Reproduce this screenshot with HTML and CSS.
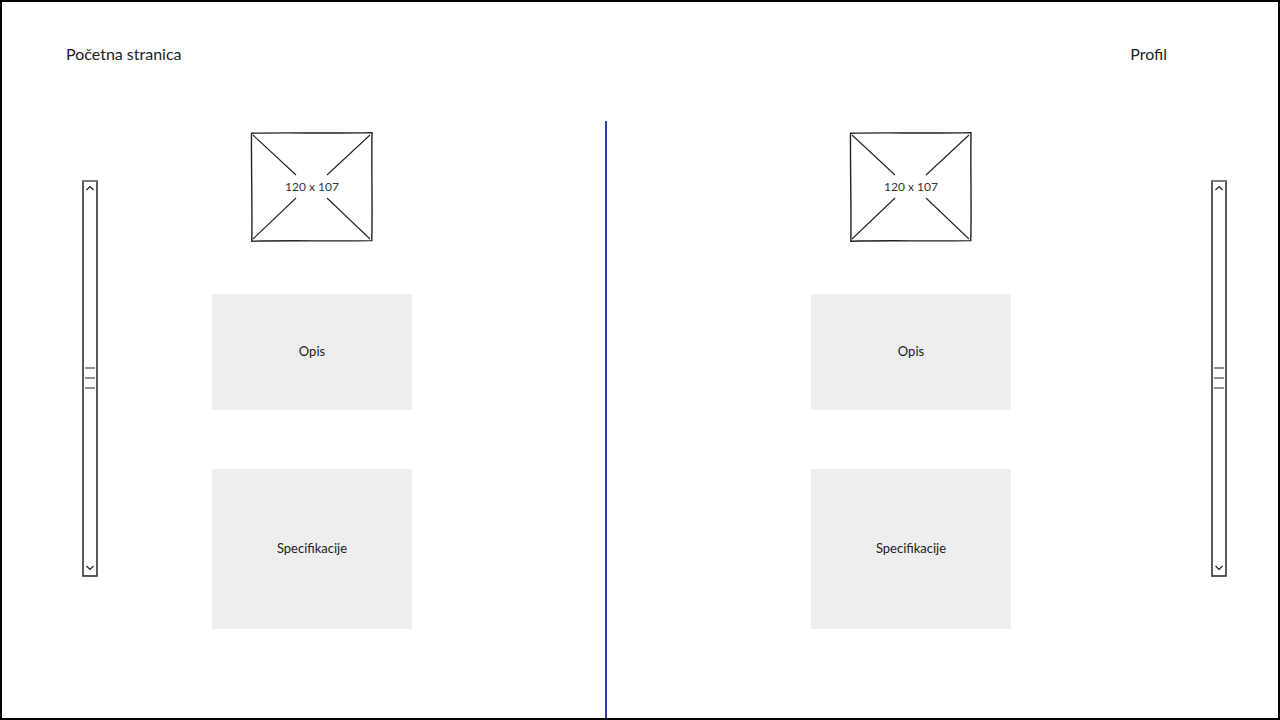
FILE: index.html
```html
<!DOCTYPE html>
<html lang="hr">
<head>
<meta charset="utf-8">
<title>Wireframe</title>
<link rel="stylesheet" href="styles.css">
</head>
<body>
<div class="frame">
  <header class="topbar">
    <span class="nav-link">Početna stranica</span>
    <span class="nav-link">Profil</span>
  </header>
  <main class="main">
    <section class="panel panel-left">
      <div class="scrollbar">
        <svg width="16" height="397" viewBox="0 0 16 397">
          <rect x="1" y="1" width="14" height="395" fill="none" stroke="#333" stroke-width="1.6"/>
          <line x1="1" y1="1" x2="15" y2="1" stroke="#888" stroke-width="1.6"/>
          <polyline points="4.5,10 8,6.5 11.5,10" fill="none" stroke="#222" stroke-width="1.2"/>
          <polyline points="4.5,386 8,389.5 11.5,386" fill="none" stroke="#222" stroke-width="1.2"/>
          <line x1="3" y1="188" x2="13" y2="188" stroke="#555" stroke-width="1.3"/>
          <line x1="3" y1="198" x2="13" y2="198" stroke="#555" stroke-width="1.3"/>
          <line x1="3" y1="208" x2="13" y2="208" stroke="#555" stroke-width="1.3"/>
        </svg>
      </div>
      <div class="content">
        <div class="placeholder">
          <svg width="124" height="112" viewBox="0 0 124 112">
            <path d="M1.5 2.2 C40 1.4 80 2.6 122 1.6 C121.4 40 122.6 72 121.8 109.6 C80 110.4 40 109.2 1.8 110.2 C2.4 72 1.2 40 1.5 2.2 Z" fill="none" stroke="#222" stroke-width="1.4"/>
            <path d="M3 4 L46 44" stroke="#222" stroke-width="1.1"/>
            <path d="M77 67 L120 108" stroke="#222" stroke-width="1.1"/>
            <path d="M120 4 L77 44" stroke="#222" stroke-width="1.1"/>
            <path d="M46 67 L3 108" stroke="#222" stroke-width="1.1"/>
          </svg>
          <span class="ph-label">120 x 107</span>
        </div>
        <div class="box box-opis">Opis</div>
        <div class="box box-spec">Specifikacije</div>
      </div>
    </section>
    <div class="divider"></div>
    <section class="panel panel-right">
      <div class="content">
        <div class="placeholder">
          <svg width="124" height="112" viewBox="0 0 124 112">
            <path d="M1.5 2.2 C40 1.4 80 2.6 122 1.6 C121.4 40 122.6 72 121.8 109.6 C80 110.4 40 109.2 1.8 110.2 C2.4 72 1.2 40 1.5 2.2 Z" fill="none" stroke="#222" stroke-width="1.4"/>
            <path d="M3 4 L46 44" stroke="#222" stroke-width="1.1"/>
            <path d="M77 67 L120 108" stroke="#222" stroke-width="1.1"/>
            <path d="M120 4 L77 44" stroke="#222" stroke-width="1.1"/>
            <path d="M46 67 L3 108" stroke="#222" stroke-width="1.1"/>
          </svg>
          <span class="ph-label">120 x 107</span>
        </div>
        <div class="box box-opis">Opis</div>
        <div class="box box-spec">Specifikacije</div>
      </div>
      <div class="scrollbar">
        <svg width="16" height="397" viewBox="0 0 16 397">
          <rect x="1" y="1" width="14" height="395" fill="none" stroke="#333" stroke-width="1.6"/>
          <line x1="1" y1="1" x2="15" y2="1" stroke="#888" stroke-width="1.6"/>
          <polyline points="4.5,10 8,6.5 11.5,10" fill="none" stroke="#222" stroke-width="1.2"/>
          <polyline points="4.5,386 8,389.5 11.5,386" fill="none" stroke="#222" stroke-width="1.2"/>
          <line x1="3" y1="188" x2="13" y2="188" stroke="#555" stroke-width="1.3"/>
          <line x1="3" y1="198" x2="13" y2="198" stroke="#555" stroke-width="1.3"/>
          <line x1="3" y1="208" x2="13" y2="208" stroke="#555" stroke-width="1.3"/>
        </svg>
      </div>
    </section>
  </main>
</div>
</body>
</html>
```

FILE: styles.css
```css
* { box-sizing: border-box; }
html, body { margin: 0; padding: 0; background: #fff; }
body { font-family: Lato, "Liberation Sans", sans-serif; color: #222; }

.frame {
  width: 1280px;
  height: 720px;
  border: 2px solid #000;
  display: flex;
  flex-direction: column;
}

.topbar {
  height: 119px;
  display: flex;
  justify-content: space-between;
  align-items: flex-start;
  padding: 42px 111px 0 64px;
}
.nav-link { font-size: 16px; line-height: 19px; }

.main { flex: 1; display: flex; }

.panel { display: flex; align-items: flex-start; }
.panel-left { width: 603px; padding-left: 80px; }
.panel-right { flex: 1; padding-left: 204px; }

.divider { width: 2px; background: #2a3c9e; }

.scrollbar { width: 16px; height: 397px; margin-top: 59px; }
.scrollbar svg { display: block; }
.panel-left .scrollbar { margin-right: 114px; }
.panel-right .scrollbar { margin-left: 200px; }

.content {
  width: 200px;
  display: flex;
  flex-direction: column;
  align-items: center;
  padding-top: 10px;
}

.placeholder {
  position: relative;
  width: 124px;
  height: 112px;
}
.placeholder svg { display: block; }
.ph-label {
  position: absolute;
  left: 0; right: 0; top: 48px;
  text-align: center;
  font-size: 12px;
  line-height: 15px;
  color: #333;
}

.box {
  width: 200px;
  background: #eeeeee;
  display: flex;
  align-items: center;
  justify-content: center;
  padding-bottom: 2px;
  font-size: 13px;
  color: #222;
}
.box-opis { height: 116px; margin-top: 51px; }
.box-spec { height: 160px; margin-top: 59px; }
```
